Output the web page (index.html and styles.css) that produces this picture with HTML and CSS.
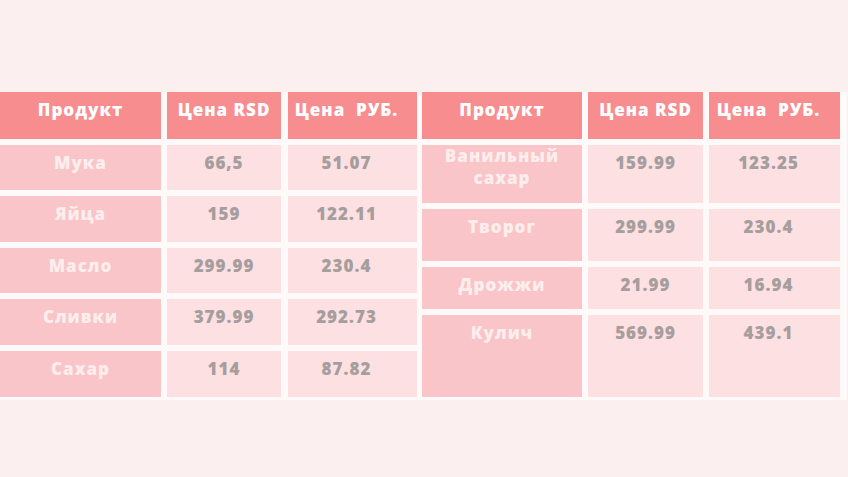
FILE: index.html
```html
<!DOCTYPE html>
<html lang="ru">
<head>
<meta charset="utf-8">
<title>Цены</title>
<link rel="stylesheet" href="styles.css">
</head>
<body>
<div class="sheet">
  <div class="table left">
    <div class="cell head">Продукт</div>
    <div class="cell head">Цена RSD</div>
    <div class="cell head last">Цена&nbsp; РУБ.</div>

    <div class="cell name">Мука</div>
    <div class="cell val">66,5</div>
    <div class="cell val last">51.07</div>

    <div class="cell name">Яйца</div>
    <div class="cell val">159</div>
    <div class="cell val last">122.11</div>

    <div class="cell name">Масло</div>
    <div class="cell val">299.99</div>
    <div class="cell val last">230.4</div>

    <div class="cell name">Сливки</div>
    <div class="cell val">379.99</div>
    <div class="cell val last">292.73</div>

    <div class="cell name">Сахар</div>
    <div class="cell val">114</div>
    <div class="cell val last">87.82</div>
  </div>

  <div class="table right">
    <div class="cell head">Продукт</div>
    <div class="cell head">Цена RSD</div>
    <div class="cell head last">Цена&nbsp; РУБ.</div>

    <div class="cell name two">Ванильный<br>сахар</div>
    <div class="cell val">159.99</div>
    <div class="cell val last">123.25</div>

    <div class="cell name">Творог</div>
    <div class="cell val">299.99</div>
    <div class="cell val last">230.4</div>

    <div class="cell name">Дрожжи</div>
    <div class="cell val">21.99</div>
    <div class="cell val last">16.94</div>

    <div class="cell name">Кулич</div>
    <div class="cell val">569.99</div>
    <div class="cell val last">439.1</div>
  </div>
</div>
</body>
</html>
```

FILE: styles.css
```css
html, body {
  margin: 0;
  padding: 0;
}

body {
  background: #fcefef;
  font-family: "Open Sans", "DejaVu Sans", sans-serif;
  font-weight: 800;
  width: 848px;
  height: 477px;
  overflow: hidden;
}

.sheet {
  margin-top: 92px;
  display: flex;
  gap: 5px;
  background: #fffafa;
  padding: 0 7px 3px 0;
  width: max-content;
}

.table {
  display: grid;
  row-gap: 6px;
}

.left {
  grid-template-columns: 161px 114px 130px;
  grid-template-rows: 47px 45px 46px 45px 46px 46px;
  column-gap: 6px;
}

.left .cell:nth-child(3n+3) {
  margin-left: 1px;
}

.right {
  grid-template-columns: 160px 115px 131px;
  grid-template-rows: 47px 58px 52px 42px 82px;
  column-gap: 6px;
}

.cell {
  text-align: center;
  padding-top: 7px;
  line-height: 22px;
  font-size: 17px;
  letter-spacing: 1px;
  white-space: nowrap;
  box-sizing: border-box;
}

.head {
  background: #f88d90;
  color: #ffffff;
  padding-top: 7px;
}

.name {
  background: #f9c5c8;
  color: #fdeeee;
}

.val {
  background: #fde0e1;
  color: #a69d9e;
}

.last {
  padding-right: 12px;
}

.two {
  padding-top: 0;
  line-height: 22px;
}
```
